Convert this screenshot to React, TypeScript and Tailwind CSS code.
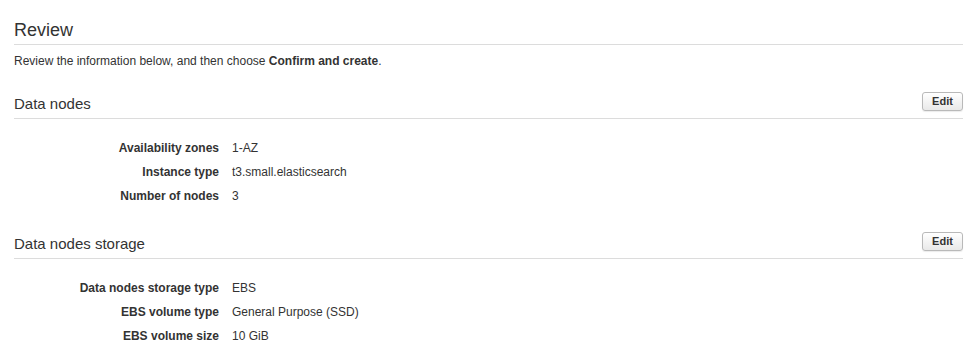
const dataNodes = [
  { label: 'Availability zones', value: '1-AZ' },
  { label: 'Instance type', value: 't3.small.elasticsearch' },
  { label: 'Number of nodes', value: '3' },
]

const storage = [
  { label: 'Data nodes storage type', value: 'EBS' },
  { label: 'EBS volume type', value: 'General Purpose (SSD)' },
  { label: 'EBS volume size', value: '10 GiB' },
]

function SectionHeader({ title }: { title: string }) {
  return (
    <div className="flex items-end justify-between border-b border-[#dcdcdc] pb-[4px]">
      <h2 className="text-[15px] leading-[20px] text-[#333]">{title}</h2>
      <button className="mb-[3px] h-[19px] w-[41px] rounded-[3px] border border-[#b9b9b9] bg-linear-to-b from-white to-[#e9e9e9] text-[11px] font-bold leading-none text-[#333] shadow-[0_1px_1px_rgba(0,0,0,0.08)]">
        Edit
      </button>
    </div>
  )
}

function Rows({ rows }: { rows: { label: string; value: string }[] }) {
  return (
    <div className="pt-[17px]">
      {rows.map((r) => (
        <div key={r.label} className="flex h-[24px] items-center text-[12px] text-[#333]">
          <div className="w-[205px] shrink-0 text-right font-bold">{r.label}</div>
          <div className="pl-[13px]">{r.value}</div>
        </div>
      ))}
    </div>
  )
}

export default function App() {
  return (
    <div className="h-[354px] w-[980px] overflow-hidden bg-white pl-[14px] pr-[17px] font-['Liberation_Sans',Arial,sans-serif]">
      <h1 className="mt-[18px] border-b border-[#dcdcdc] pb-[2px] text-[18px] leading-[24px] text-[#333]">
        Review
      </h1>
      <p className="mt-[8px] text-[12px] leading-[16px] text-[#333]">
        Review the information below, and then choose <b>Confirm and create</b>.
      </p>

      <section className="mt-[23px]">
        <SectionHeader title="Data nodes" />
        <Rows rows={dataNodes} />
      </section>

      <section className="mt-[24px]">
        <SectionHeader title="Data nodes storage" />
        <Rows rows={storage} />
      </section>
    </div>
  )
}
